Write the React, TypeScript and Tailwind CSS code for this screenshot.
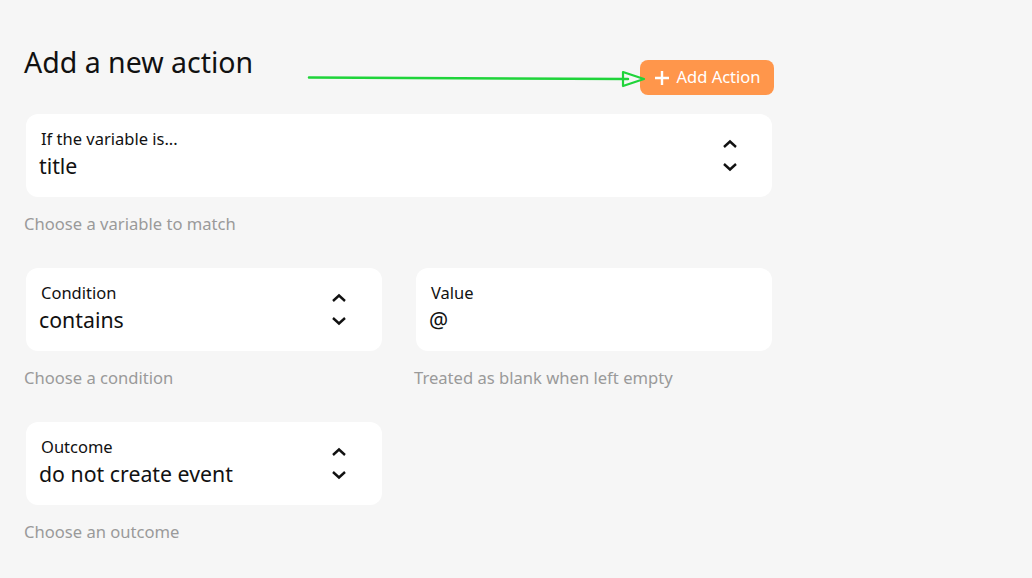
import React from "react";

const font = { fontFamily: '"Noto Sans", "Open Sans", sans-serif' };

function Chevrons() {
  return (
    <div className="flex flex-col items-center gap-[13px]">
      <svg width="16" height="10" viewBox="0 0 16 10" fill="none">
        <path d="M2 8 L8 2.5 L14 8" stroke="#111" strokeWidth="2.4" />
      </svg>
      <svg width="16" height="10" viewBox="0 0 16 10" fill="none">
        <path d="M2 2 L8 7.5 L14 2" stroke="#111" strokeWidth="2.4" />
      </svg>
    </div>
  );
}

function Field({
  label,
  value,
  helper,
  select = true,
  chevronRight,
}: {
  label: string;
  value: string;
  helper: string;
  select?: boolean;
  chevronRight: string;
}) {
  return (
    <div className="flex flex-col">
      <div className="mx-[2px] h-[83px] rounded-[12px] bg-white flex items-start justify-between">
        <div className="flex flex-col pl-[13px] pt-[14px]">
          <span className="pl-[2px] text-[16.5px] leading-[22px] text-[#111]">{label}</span>
          <span className="text-[21.3px] leading-[32px] text-[#111]">{value}</span>
        </div>
        {select && (
          <div className={"self-center " + chevronRight}>
            <Chevrons />
          </div>
        )}
      </div>
      <div className="mt-[16px] text-[16.6px] leading-[22px] text-[#9a9a9a]">{helper}</div>
    </div>
  );
}

export default function App() {
  return (
    <div className="relative w-[1032px] h-[578px] bg-[#f6f6f6] overflow-hidden" style={font}>
      <div className="w-[750px] ml-[24px] pt-[44px]">
        <div className="flex items-start justify-between">
          <h1 className="text-[28.5px] leading-[36px] text-[#111] font-normal">Add a new action</h1>
          <button className="mt-[16px] h-[35px] w-[134px] rounded-[8px] bg-[#ff964b] text-white flex items-center justify-center gap-[7px] text-[16.5px]">
            <svg width="16" height="16" viewBox="0 0 16 16">
              <path d="M8 1 V15 M1 8 H15" stroke="white" strokeWidth="2.4" />
            </svg>
            <span>Add Action</span>
          </button>
        </div>
        <div className="mt-[19px]">
          <Field
            label="If the variable is..."
            value="title"
            helper="Choose a variable to match"
            chevronRight="pr-[34px]"
          />
        </div>
        <div className="mt-[33px] grid grid-cols-2 gap-[30px]">
          <Field label="Condition" value="contains" helper="Choose a condition" chevronRight="pr-[35px]" />
          <Field label="Value" value="@" helper="Treated as blank when left empty" select={false} chevronRight="" />
        </div>
        <div className="mt-[33px] grid grid-cols-2 gap-[30px]">
          <Field label="Outcome" value="do not create event" helper="Choose an outcome" chevronRight="pr-[35px]" />
        </div>
      </div>
      <svg className="absolute left-0 top-0 pointer-events-none" width="1032" height="578">
        <line x1="309" y1="77.5" x2="628" y2="79" stroke="#1fd43a" strokeWidth="2.5" strokeLinecap="round" />
        <path d="M623 72 L644 79 L623 86 Z" fill="none" stroke="#1fd43a" strokeWidth="2.2" strokeLinejoin="round" />
      </svg>
    </div>
  );
}
